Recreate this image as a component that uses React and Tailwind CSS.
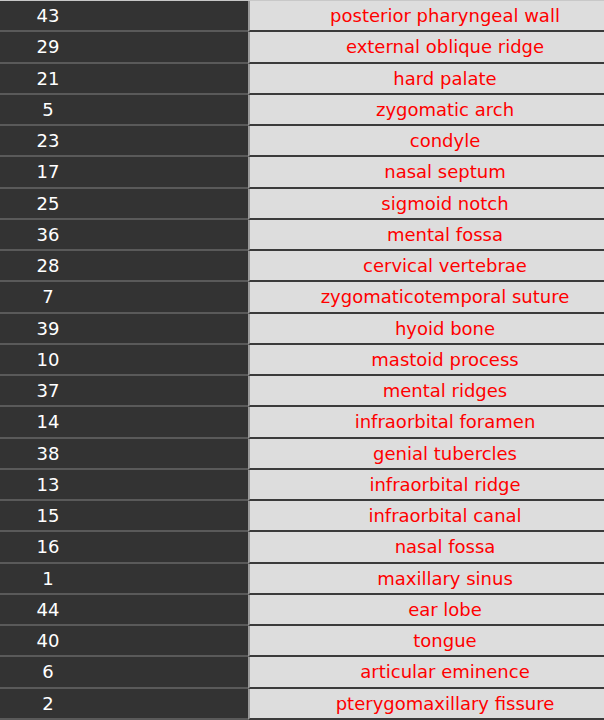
const rows = [
  ['43', 'posterior pharyngeal wall'],
  ['29', 'external oblique ridge'],
  ['21', 'hard palate'],
  ['5', 'zygomatic arch'],
  ['23', 'condyle'],
  ['17', 'nasal septum'],
  ['25', 'sigmoid notch'],
  ['36', 'mental fossa'],
  ['28', 'cervical vertebrae'],
  ['7', 'zygomaticotemporal suture'],
  ['39', 'hyoid bone'],
  ['10', 'mastoid process'],
  ['37', 'mental ridges'],
  ['14', 'infraorbital foramen'],
  ['38', 'genial tubercles'],
  ['13', 'infraorbital ridge'],
  ['15', 'infraorbital canal'],
  ['16', 'nasal fossa'],
  ['1', 'maxillary sinus'],
  ['44', 'ear lobe'],
  ['40', 'tongue'],
  ['6', 'articular eminence'],
  ['2', 'pterygomaxillary fissure'],
];

export default function App() {
  return (
    <div className="w-[604px] h-[720px] overflow-hidden bg-[#dddddd] border-t border-[#c8c8c8] font-['DejaVu_Sans',Verdana,sans-serif]">
      {rows.map(([num, label], i) => (
        <div key={i} className="flex h-[31.26px]">
          <div className="w-[248px] shrink-0 flex items-center bg-[#333333] border-b-2 border-[#5a5a5a]">
            <span className="w-[96px] text-center text-white text-[18px] leading-none pt-[1px]">{num}</span>
          </div>
          <div className="w-[392px] shrink-0 flex items-center justify-center bg-[#dddddd] border-l-2 border-l-[#9a9a9a] border-b-2 border-b-[#3a3a3a]">
            <span className="text-[#ff0000] text-[18px] leading-none pt-[1px]">{label}</span>
          </div>
        </div>
      ))}
    </div>
  );
}
